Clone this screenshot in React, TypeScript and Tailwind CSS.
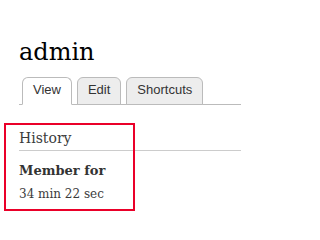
const tabs = [
  { label: 'View', active: true },
  { label: 'Edit', active: false },
  { label: 'Shortcuts', active: false },
];

export default function App() {
  return (
    <div className="relative w-[241px] h-[225px] bg-white overflow-hidden pl-[19px] pt-[38px] font-['DejaVu_Serif',serif] text-[#3b3b3b]">
      <h1 className="text-[24px] leading-[28px] text-black">admin</h1>

      <ul className="mt-[11px] flex gap-[5px] pl-[3px] border-b border-[#bbb] font-['Liberation_Sans',Arial,sans-serif] text-[13px]">
        {tabs.map((t) => (
          <li
            key={t.label}
            className={
              'rounded-t-[6px] border border-[#bbb] -mb-px px-[10px] pt-[3px] pb-[6px] leading-[17px] text-[#333] ' +
              (t.active ? 'bg-white border-b-white' : 'bg-[#ededed]')
            }
          >
            {t.label}
          </li>
        ))}
      </ul>

      <section className="mt-[23px]">
        <h2 className="text-[14px] leading-[20px] pb-[2px] border-b border-[#ccc]">History</h2>
        <dl>
          <dt className="mt-[10px] text-[13px] leading-[19px] font-bold text-[#333]">Member for</dt>
          <dd className="mt-[5px] text-[12px] leading-[18px]">34 min 22 sec</dd>
        </dl>
      </section>

      <div className="absolute left-[4px] top-[123px] w-[131px] h-[88px] border-2 border-[#ea0029]" />
    </div>
  );
}
